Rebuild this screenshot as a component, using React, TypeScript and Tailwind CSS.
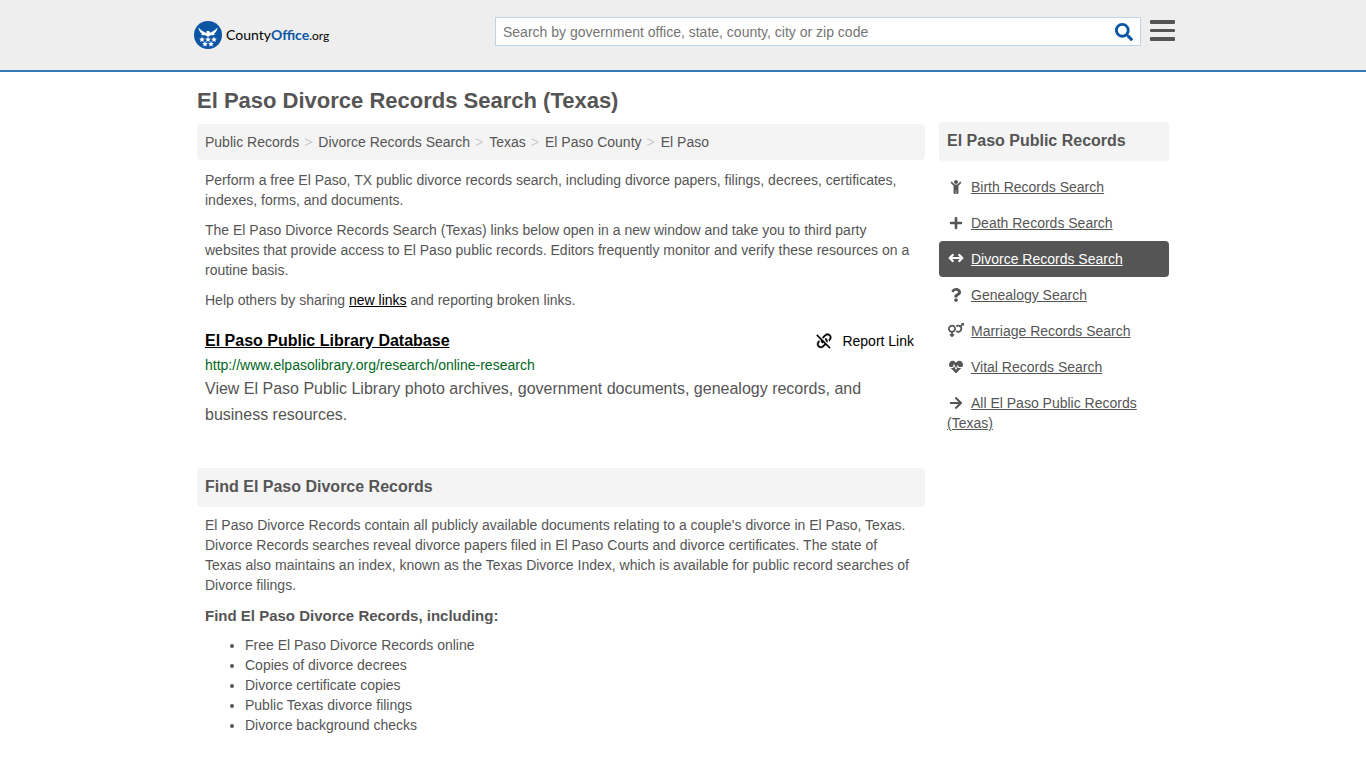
import React from "react";
import {
  FaArrowRight,
  FaChild,
  FaHeartbeat,
  FaPlus,
  FaQuestion,
  FaSearch,
  FaVenusMars,
} from "react-icons/fa";
import type { IconType } from "react-icons";

const crumbs = ["Public Records", "Divorce Records Search", "Texas", "El Paso County", "El Paso"];

function ArrowsIcon({ className }: { className?: string }) {
  return (
    <svg
      viewBox="0 0 16 16"
      className={className}
      fill="none"
      stroke="currentColor"
      strokeWidth="2.2"
      strokeLinecap="round"
      strokeLinejoin="round"
      aria-hidden="true"
    >
      <path d="M2 8h12M4.700 5 1.700 8l3 3M11.300 5l3 3-3 3" />
    </svg>
  );
}

const sideLinks: { label: string; icon: IconType | typeof ArrowsIcon; active?: boolean; wide?: boolean }[] = [
  { label: "Birth Records Search", icon: FaChild },
  { label: "Death Records Search", icon: FaPlus },
  { label: "Divorce Records Search", icon: ArrowsIcon, active: true, wide: true },
  { label: "Genealogy Search", icon: FaQuestion },
  { label: "Marriage Records Search", icon: FaVenusMars, wide: true },
  { label: "Vital Records Search", icon: FaHeartbeat },
  { label: "All El Paso Public Records (Texas)", icon: FaArrowRight },
];

const included = [
  "Free El Paso Divorce Records online",
  "Copies of divorce decrees",
  "Divorce certificate copies",
  "Public Texas divorce filings",
  "Divorce background checks",
];

const stars = [
  [8, 18.5],
  [14, 18.5],
  [20, 18.5],
  [11, 23],
  [17, 23],
];

function Logo() {
  return (
    <a href="#" aria-label="CountyOffice.org" className="flex items-center gap-1">
      <svg viewBox="0 0 28 28" className="size-7" aria-hidden="true">
        <circle cx="14" cy="14" r="14" fill="#0b55a5" />
        <path
          fill="#fff"
          d="M4.500 6.500c.3 3 1.600 5 3.700 6.300l-1.400.1c1.500 1.300 3.200 1.600 4.700 1.400L14 16l2.500-1.700c1.500.2 3.200-.1 4.700-1.400l-1.400-.1c2.100-1.300 3.400-3.300 3.700-6.300-2.300 2.600-4.400 3.900-7.300 5.200l-.8-1.500-1.700-.4-1.500.8.600.7-.6.600C9 10.500 6.800 9.100 4.500 6.500z"
        />
        {stars.map(([x, y]) => (
          <path
            key={`${x}-${y}`}
            fill="#fff"
            transform={`translate(${x} ${y})`}
            d="M0-2.900.8-.9l2.100.1-1.600 1.400.5 2L0 1.500l-1.800 1.100.5-2L-2.900-.8l2.100-.1z"
          />
        ))}
      </svg>
      <span className="font-['Lato','Liberation_Sans',sans-serif] text-sm leading-5 text-black">
        County<span className="font-bold text-[#0b55a5]">Office</span>
        <span className="text-xs">.org</span>
      </span>
    </a>
  );
}

function BrokenLinkIcon() {
  return (
    <svg
      viewBox="1.500 2 20.500 20.500"
      className="size-4"
      fill="currentColor"
      stroke="currentColor"
      strokeWidth="0.4"
      aria-hidden="true"
    >
      <path d="M2 5.270 3.280 4 20 20.720 18.730 22 13.900 17.170l-2.610 2.610c-1.950 1.950-5.120 1.950-7.070 0s-1.950-5.120 0-7.070l1.490-1.490c-.01.820.120 1.640.4 2.430l-.470.470c-1.180 1.170-1.180 3.070 0 4.240 1.170 1.180 3.070 1.180 4.240 0l2.620-2.600-1.620-1.610c-.01.240-.110.490-.290.680-.390.390-1.030.390-1.420 0-1.050-1.060-1.540-2.460-1.450-3.830zM12.710 4.220c1.950-1.950 5.120-1.950 7.070 0s1.950 5.120 0 7.070l-1.490 1.490c.01-.820-.120-1.640-.4-2.420l.470-.480c1.180-1.170 1.180-3.070 0-4.240-1.170-1.180-3.070-1.180-4.240 0l-3.330 3.330-1.410-1.420zM13.410 9.170c.390-.390 1.030-.390 1.420 0 1.370 1.370 1.780 3.330 1.230 5.060l-1.780-1.770c-.05-.680-.340-1.350-.870-1.870-.410-.390-.410-1.030 0-1.420z" />
    </svg>
  );
}

export default function App() {
  return (
    <div className="min-h-screen bg-white font-['Liberation_Sans',Arial,sans-serif] text-sm leading-5 text-[#555]">
      <header className="border-b-2 border-[#337ab7] bg-[#eee]">
        <div className="mx-auto flex h-[70px] max-w-[984px] items-start justify-between pl-[3px]">
          <div className="pt-[21px]">
            <Logo />
          </div>
          <div className="flex items-start gap-[9px] pt-[17px]">
            <form role="search" className="flex h-[29px] w-[646px] items-center border border-[#bcd3e8] bg-white">
              <input
                type="text"
                aria-label="Search"
                placeholder="Search by government office, state, county, city or zip code"
                className="h-full min-w-0 flex-1 px-[7px] outline-none placeholder:text-[#757575]"
              />
              <button type="submit" aria-label="Search" className="px-[7px] text-[#0b55a5]">
                <FaSearch className="size-[18px]" />
              </button>
            </form>
            <button type="button" aria-label="Menu" className="pt-[3px] text-[#555]">
              <svg viewBox="0 0 25 22" className="h-[22px] w-[25px]" fill="currentColor" aria-hidden="true">
                <rect width="25" height="4" rx="1" />
                <rect y="9" width="25" height="3" rx="1" />
                <rect y="17" width="25" height="4" rx="1" />
              </svg>
            </button>
          </div>
        </div>
      </header>

      <div className="mx-auto max-w-[972px]">
        <h1 className="pt-[17px] text-[22px] leading-6 font-bold">El Paso Divorce Records Search (Texas)</h1>
        <div className="flex items-start gap-[14px] pt-[9px]">
          <main className="min-w-0 flex-1 pt-0.5">
            <nav aria-label="Breadcrumb" className="rounded bg-[#f4f4f4] p-2">
              <ol className="flex">
                {crumbs.map((c, i) => (
                  <li key={c}>
                    {i > 0 && <span className="pr-[6px] pl-[5px] text-[#ccc]">&gt;</span>}
                    <a href="#">{c}</a>
                  </li>
                ))}
              </ol>
            </nav>

            <div className="flex flex-col gap-[10px] px-2 pt-[10px]">
              <p>
                Perform a free El Paso, TX public divorce records search, including divorce papers, filings, decrees,
                certificates, indexes, forms, and documents.
              </p>
              <p>
                The El Paso Divorce Records Search (Texas) links below open in a new window and take you to third party
                websites that provide access to El Paso public records. Editors frequently monitor and verify these
                resources on a routine basis.
              </p>
              <p>
                Help others by sharing{" "}
                <a href="#" className="text-black underline">
                  new links
                </a>{" "}
                and reporting broken links.
              </p>
            </div>

            <article className="px-2 pt-[21px]">
              <div className="flex items-center justify-between pr-[3px]">
                <h2 className="text-base leading-5 font-bold text-black">
                  <a href="#" className="underline">
                    El Paso Public Library Database
                  </a>
                </h2>
                <a href="#" className="flex items-center gap-[10px] text-black">
                  <BrokenLinkIcon />
                  Report Link
                </a>
              </div>
              <p className="pt-1 text-[#006621]">http://www.elpasolibrary.org/research/online-research</p>
              <p className="pt-px text-base leading-[26px]">
                View El Paso Public Library photo archives, government documents, genealogy records, and business
                resources.
              </p>
            </article>

            <section className="pt-10">
              <h2 className="rounded bg-[#f4f4f4] px-2 pt-[9px] pb-[10px] text-base leading-5 font-bold">
                Find El Paso Divorce Records
              </h2>
              <div className="px-2 pt-2">
                <p>
                  El Paso Divorce Records contain all publicly available documents relating to a couple's divorce in El
                  Paso, Texas. Divorce Records searches reveal divorce papers filed in El Paso Courts and divorce
                  certificates. The state of Texas also maintains an index, known as the Texas Divorce Index, which is
                  available for public record searches of Divorce filings.
                </p>
                <h3 className="pt-[11px] pb-[9px] text-[15px] leading-5 font-bold">
                  Find El Paso Divorce Records, including:
                </h3>
                <ul className="list-disc pl-10">
                  {included.map((t) => (
                    <li key={t}>{t}</li>
                  ))}
                </ul>
              </div>
            </section>
          </main>

          <aside className="w-[230px] shrink-0">
            <h2 className="rounded bg-[#f4f4f4] px-2 pt-[9px] pb-[10px] text-base leading-5 font-bold">
              El Paso Public Records
            </h2>
            <ul className="pt-2">
              {sideLinks.map(({ label, icon: Icon, active, wide }) => (
                <li key={label} className={active ? "rounded bg-[#555] p-2 text-white" : "p-2"}>
                  <span className="mr-[6px] inline-flex h-[14px] w-[18px] items-center justify-center align-[-2px]">
                    <Icon className={wide ? "size-4 shrink-0" : "size-[14px] shrink-0"} />
                  </span>
                  <a href="#" className="underline">
                    {label}
                  </a>
                </li>
              ))}
            </ul>
          </aside>
        </div>
      </div>
    </div>
  );
}
